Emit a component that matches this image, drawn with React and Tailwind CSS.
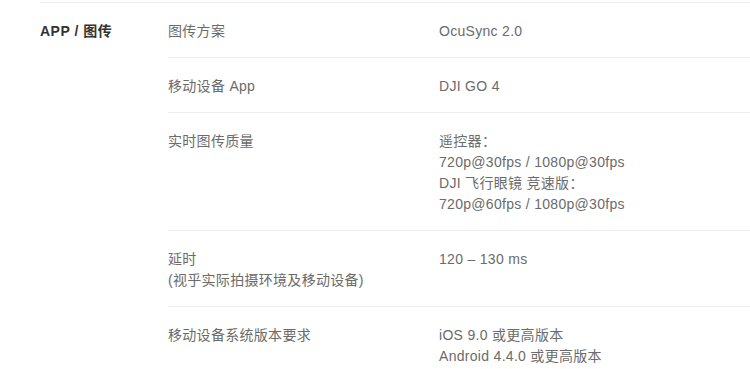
const rows = [
  { label: ["图传方案"], value: ["OcuSync 2.0"] },
  { label: ["移动设备 App"], value: ["DJI GO 4"] },
  {
    label: ["实时图传质量"],
    value: [
      "遥控器：",
      "720p@30fps / 1080p@30fps",
      "DJI 飞行眼镜 竞速版：",
      "720p@60fps / 1080p@30fps",
    ],
  },
  { label: ["延时", "(视乎实际拍摄环境及移动设备)"], value: ["120 – 130 ms"] },
  {
    label: ["移动设备系统版本要求"],
    value: ["iOS 9.0 或更高版本", "Android 4.4.0 或更高版本"],
  },
];

export default function App() {
  return (
    <div
      className="w-[750px] h-[369px] overflow-hidden bg-white pl-10"
      style={{ fontFamily: '"Liberation Sans", "Noto Sans CJK SC", sans-serif' }}
    >
      <div className="mt-[2px] border-t border-[#efefef] flex">
        <div className="w-32 shrink-0 pt-[18px] text-[14px] leading-[21px] font-bold tracking-[0.5px] text-[#333]">
          APP / 图传
        </div>
        <div className="flex-1">
          {rows.map((row, i) => (
            <div key={i} className="flex pt-[18px] pb-[15px] border-b border-[#efefef] text-[14px] leading-[21px] tracking-[0.3px] text-[#6b6b6b]">
              <div className="w-[271px] shrink-0">
                {row.label.map((t, j) => (
                  <div key={j}>{t}</div>
                ))}
              </div>
              <div className="flex-1">
                {row.value.map((t, j) => (
                  <div key={j}>{t}</div>
                ))}
              </div>
            </div>
          ))}
        </div>
      </div>
    </div>
  );
}
